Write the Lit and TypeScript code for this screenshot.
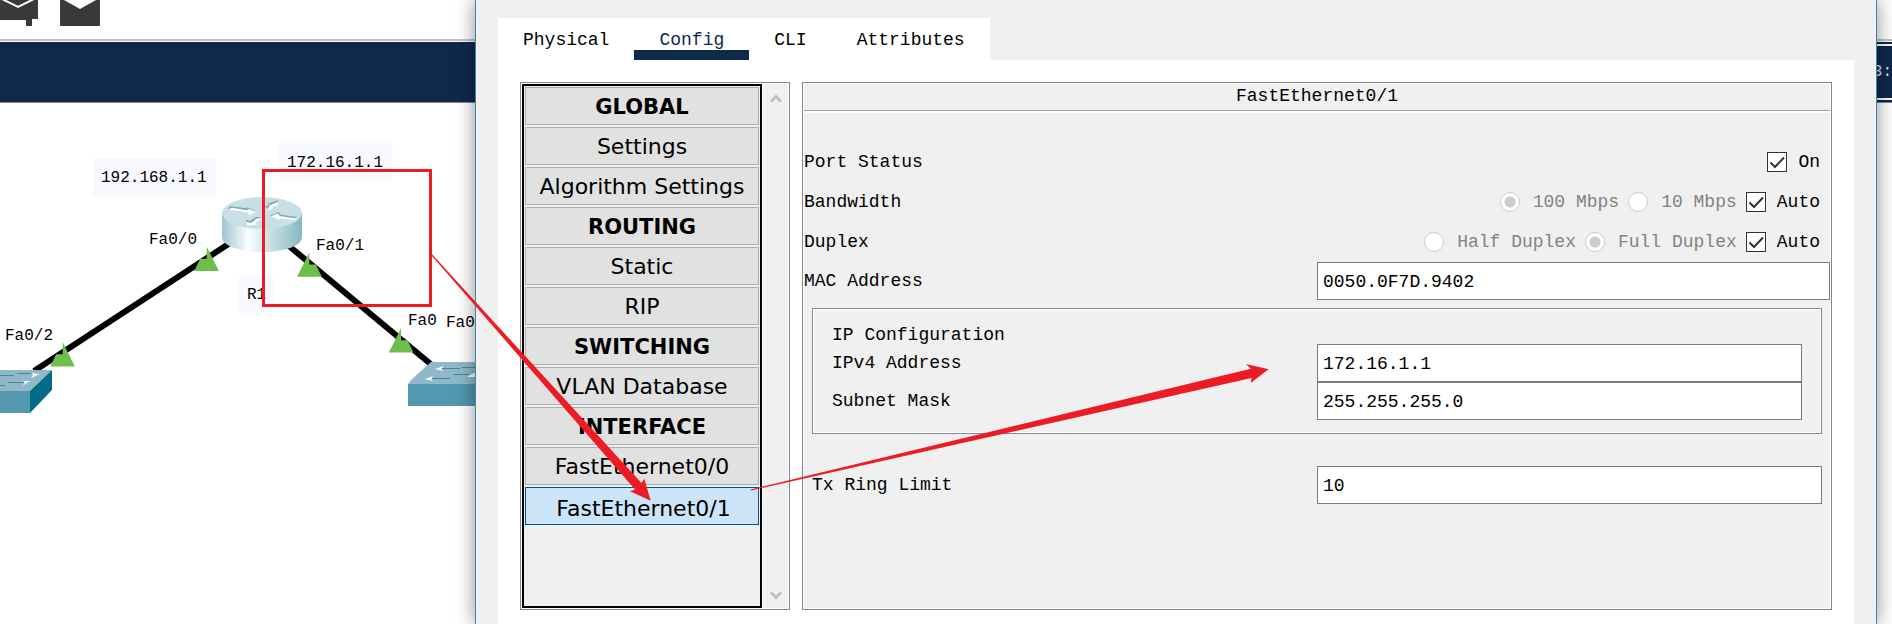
import { LitElement, html, css, svg } from "lit";
import { customElement, state } from "lit/decorators.js";
import { classMap } from "lit/directives/class-map.js";

const note = (x: number, y: number, w: number, text: string) => svg`
  <rect class="note" x=${x} y=${y} width=${w} height="38"></rect>
  <text x=${x + 8} y=${y + 24}>${text}</text>`;

const link = (x: number, y: number, flip: boolean) => svg`
  <path class="up" transform="translate(${x} ${y}) scale(${flip ? -1 : 1} 1)"
    d="M0 0V12H6.500L12.500 24.300H-12.200Z"></path>`;

@customElement("topology-view")
export class TopologyView extends LitElement {
  static styles = css`
    :host {
      display: flex;
      flex-direction: column;
      overflow: hidden;
      background: #fff;
    }
    .tools {
      display: flex;
      gap: 22px;
      height: 39px;
      border-bottom: 2px solid #c3c3c3;
    }
    .tool {
      padding: 0;
      border: 0;
      background: none;
      height: 26px;
    }
    .tool svg {
      display: block;
    }
    .bar {
      height: 60px;
      margin-top: 1px;
      background: #0f294d;
      border-bottom: 1px solid #85888e;
    }
    .canvas {
      display: block;
      flex: 1;
      width: 100%;
      min-height: 320px;
      font: 16px "Liberation Mono", monospace;
    }
    .note {
      fill: #f8f8ff;
    }
    .up {
      fill: #6cbf4a;
    }
    .cable {
      stroke: #000;
      stroke-width: 6;
    }
    .shade {
      fill: #7ba9b6;
    }
    .light {
      fill: #fff;
    }
    .trace {
      stroke: #4a8599;
      stroke-width: 1;
      fill: none;
    }
  `;

  render() {
    return html`
      <div class="tools">
        <button class="tool" aria-label="Add simple PDU">
          <svg width="38" height="26">
            <path d="M0 0H38V19H32V26H26V20H0Z" fill="#39393b" />
            <path d="M2 -1L18 7L34 -1" fill="none" stroke="#fff" stroke-width="2" />
          </svg>
        </button>
        <button class="tool" aria-label="Add complex PDU">
          <svg width="40" height="26">
            <path d="M0 0H4L20 9L36 0H40V25Q40 26 39 26H1Q0 26 0 25Z" fill="#39393b" />
          </svg>
        </button>
      </div>
      <div class="bar"></div>
      <svg class="canvas">
        <defs>
          <linearGradient id="drum">
            <stop offset="0" stop-color="#9cc5ce" />
            <stop offset=".32" stop-color="#fafdfd" />
            <stop offset=".5" stop-color="#dcebee" />
            <stop offset="1" stop-color="#86b8c2" />
          </linearGradient>
        </defs>
        <g transform="translate(0 -103)">
          <path class="cable" d="M34 371L230 243" />
          <path class="cable" d="M289 246L433 366" />
          ${note(93, 158, 123, "192.168.1.1")} ${note(279, 143, 113, "172.16.1.1")}
          ${note(239, 275, 34, "R1")}
          <text x="149" y="244">Fa0/0</text>
          <text x="316" y="250">Fa0/1</text>
          <text x="5" y="340">Fa0/2</text>
          <text x="408" y="325">Fa0</text>
          <text x="446" y="327">Fa0</text>
          ${link(206.7, 246.7, true)} ${link(309.3, 252.5, false)}
          ${link(401, 328.3, false)} ${link(62.7, 342.3, true)}

          <path d="M222 213V237C222 246 240 252 262 252S302 246 302 237V213Z" fill="url(#drum)" />
          <ellipse cx="262" cy="213" rx="40" ry="16" fill="#c9dfe6" />
          <path class="shade" d="M227.500 208.500L230 206.300L247.500 208.300L247 207L256 211L249 213L230 208.500Z" />
          <path class="light" d="M229 209.500L232 207.700L247 210.300L249 208.700L256 212L249 215.300L248 212.700Z" />
          <path class="shade" d="M269.500 216L279 212L280 214.500L297 217L296 218.500L279 216Z" />
          <path class="light" d="M296 220.500L297 218.500L280 216.300L278 213.500L271 216.300L279 219.800L280.500 218.300Z" />
          <path class="shade" d="M265 207L270 204L266 204L278 200.500V202L272 205L267 208Z" />
          <path class="light" d="M267 211L270 207.500L269 205.500L278 202V206L276 205.300L270 209.700Z" />
          <path class="shade" d="M262 217H256L250 221L246 220V222L252 223L257 219Z" />
          <path class="light" d="M262 218.500H257L251 223L247 222V225.500L258 224.500L255 223Z" />

          <path d="M0 370H52L30 391H0Z" fill="#8fb9c9" />
          <path d="M0 391H30V413H0Z" fill="#5398ae" />
          <path d="M52 370V390L30 413V391Z" fill="#006c88" />
          <path class="trace" d="M17 373.500H33M0 375.500H14M8 382.500H24M0 385.500H5" />
          <path class="light" d="M31 373L40 374L31 378L33 375ZM23 381L30 381L22 386L25 383Z" />

          <path d="M431 362H476V384H408L412 379Z" fill="#8fb9c9" />
          <path d="M408 384H476V406H408Z" fill="#5398ae" />
          <path class="trace" d="M442 368.500H460M462 367.500H476M432 378.500H450M453 374.500H469" />
          <path class="light" d="M435 369L444 366L441 369L443 371ZM425 379L433 376L431 379L433 381ZM467 377L474 373H476V377Z" />
        </g>
      </svg>
    `;
  }
}

@customElement("app-root")
export class AppRoot extends LitElement {
  @state() private tab = "Config";
  @state() private item = "FastEthernet0/1";

  private tabs = ["Physical", "Config", "CLI", "Attributes"];
  private items = [
    "GLOBAL", "Settings", "Algorithm Settings", "ROUTING", "Static", "RIP",
    "SWITCHING", "VLAN Database", "INTERFACE", "FastEthernet0/0", "FastEthernet0/1",
  ];

  static styles = css`
    :host {
      display: grid;
      grid-template-columns: 475px minmax(0, 1fr) 15px;
      position: relative;
      min-height: 100vh;
      overflow: hidden;
      background: #fff;
      color: #000;
      font: 18px/24px "Liberation Mono", monospace;
    }
    * {
      box-sizing: border-box;
    }
    .dialog {
      display: flex;
      flex-direction: column;
      z-index: 1;
      padding: 18px 22px 0;
      background: #f0f0f0;
      border: solid #3d87a8;
      border-width: 0 1px;
      box-shadow: 0 0 18px rgba(0, 0, 0, 0.45);
    }
    .tabs {
      display: flex;
      align-self: flex-start;
      background: #fff;
    }
    .tab {
      height: 42px;
      padding: 12px 25px 0;
      border: 0;
      border-bottom: 10px solid #fff;
      background: none;
      color: #000;
      font: inherit;
      line-height: 20px;
    }
    .tab.active {
      border-color: #0f294d;
      color: #0f294d;
    }
    .page {
      display: flex;
      flex: 1;
      gap: 12px;
      padding: 22px 22px 14px;
      background: #fff;
    }
    .side {
      display: flex;
      width: 270px;
      padding: 1px;
      border: 1px solid #828790;
    }
    .list {
      display: flex;
      flex-direction: column;
      gap: 2px;
      width: 240px;
      padding: 1px;
      border: 2px solid #000;
      background: #f0f0f0;
    }
    .item {
      height: 38px;
      padding: 1px 0 0;
      border: 1px solid #adadad;
      background: #e1e1e1;
      color: #000;
      font: 22px "DejaVu Sans", sans-serif;
      white-space: nowrap;
    }
    .item.head {
      font-weight: bold;
      font-size: 21px;
    }
    .item.active {
      padding: 4px 0 0 3px;
      border-color: #005499;
      background: #cce4f7;
    }
    .scroll {
      display: flex;
      flex: 1;
      flex-direction: column;
      align-items: center;
      justify-content: space-between;
      margin-left: 1px;
      padding: 10px 0 8px;
      background: #f0f0f0;
    }
    .chev {
      fill: none;
      stroke: #bfbfbf;
      stroke-width: 3;
    }
    .form {
      flex: 1;
      min-width: 0;
      padding: 1px;
      border: 1px solid #828790;
      background: #f0f0f0;
      box-shadow: inset 0 0 0 1px #fff;
    }
    .title {
      margin: 0;
      height: 29px;
      border-bottom: 2px solid #fff;
      box-shadow: inset 0 -1px #a0a0a0;
      font: inherit;
      text-align: center;
    }
    .rows {
      padding-top: 29px;
    }
    .row {
      display: grid;
      grid-template-columns: 1fr 1fr;
      align-items: center;
      line-height: 28px;
    }
    .row.options {
      grid-template-columns: auto 1fr;
      height: 40px;
    }
    .choices {
      display: flex;
      justify-content: flex-end;
      gap: 9px;
      padding-right: 10px;
    }
    .choice {
      display: flex;
      align-items: center;
      gap: 11px;
    }
    .choice.off {
      gap: 13px;
      color: #838383;
    }
    .check,
    .radio {
      appearance: none;
      width: 20px;
      height: 20px;
      margin: 0;
      border: 1px solid #333;
      background: #fff;
    }
    .check:checked {
      background: #fff
        url("data:image/svg+xml,%3Csvg xmlns='http://www.w3.org/2000/svg' width='18' height='18'%3E%3Cpath d='M2.500 9.500L7 14L16 4.500' fill='none' stroke='%23333' stroke-width='2'/%3E%3C/svg%3E");
    }
    .radio {
      border-color: #ccc;
      border-radius: 50%;
    }
    .radio:checked {
      background: radial-gradient(circle, #ccc 5px, #fff 6px);
    }
    .field {
      width: 100%;
      height: 38px;
      padding: 2px 5px 0;
      border: 1px solid #7a7a7a;
      border-radius: 0;
      background: #fff;
      color: #000;
      font: inherit;
    }
    .group {
      margin: 8px 8px 32px;
      padding: 17px 19px 13px;
      border: 1px solid #828790;
      box-shadow: inset 0 0 0 1px #fff;
    }
    .legend {
      line-height: 18px;
    }
    .row.inset {
      margin: 0 8px;
    }
    .rest {
      overflow: hidden;
      padding-top: 39px;
    }
    .clock {
      display: flex;
      align-items: center;
      justify-content: flex-end;
      height: 64px;
      border-top: 2px solid #c3c3c3;
      border-bottom: 1px solid #85888e;
      background: linear-gradient(#fff 1px, #0f294d 1px 3px, #fff 3px 5px, #0f294d 5px 57px, #fff 57px 59px, #0f294d 59px);
      color: #dfe3e8;
      font-size: 16px;
    }
    .marks {
      position: absolute;
      inset: 0;
      z-index: 2;
      width: 100%;
      height: 100%;
      pointer-events: none;
      fill: #ed1c24;
    }
    .frame {
      fill: none;
      stroke: #ed1c24;
      stroke-width: 3;
    }
  `;

  private toggle(type: "radio" | "checkbox", label: string, checked: boolean, name = "") {
    const off = type === "radio";
    return html`<label class=${classMap({ choice: true, off })}>
      <input class=${off ? "radio" : "check"} type=${type} name=${name} ?checked=${checked} ?disabled=${off} />${label}
    </label>`;
  }

  private text(id: string, label: string, value: string, extra = "") {
    return html`<div class="row ${extra}">
      <label for=${id}>${label}</label>
      <input class="field" id=${id} type="text" value=${value} />
    </div>`;
  }

  render() {
    return html`
      <topology-view></topology-view>
      <main class="dialog">
        <div class="tabs" role="tablist">
          ${this.tabs.map((t) => html`<button role="tab"
            class=${classMap({ tab: true, active: t === this.tab })}
            @click=${() => (this.tab = t)}>${t}</button>`)}
        </div>
        <div class="page">
          <div class="side">
            <nav class="list">
              ${this.items.map((t) => html`<button
                class=${classMap({ item: true, head: t.length > 3 && t === t.toUpperCase(), active: t === this.item })}
                @click=${() => (this.item = t)}>${t}</button>`)}
            </nav>
            <div class="scroll">
              <svg width="12" height="9"><path class="chev" d="M1 7.500L6 2.500L11 7.500" /></svg>
              <svg width="12" height="9"><path class="chev" d="M1 1.500L6 6.500L11 1.500" /></svg>
            </div>
          </div>
          <section class="form">
            <h2 class="title">FastEthernet0/1</h2>
            <div class="rows">
              <div class="row options">
                <span>Port Status</span>
                <div class="choices">${this.toggle("checkbox", "On", true)}</div>
              </div>
              <div class="row options">
                <span>Bandwidth</span>
                <div class="choices">
                  ${this.toggle("radio", "100 Mbps", true, "bandwidth")}
                  ${this.toggle("radio", "10 Mbps", false, "bandwidth")}
                  ${this.toggle("checkbox", "Auto", true)}
                </div>
              </div>
              <div class="row options">
                <span>Duplex</span>
                <div class="choices">
                  ${this.toggle("radio", "Half Duplex", false, "duplex")}
                  ${this.toggle("radio", "Full Duplex", true, "duplex")}
                  ${this.toggle("checkbox", "Auto", true)}
                </div>
              </div>
              ${this.text("mac", "MAC Address", "0050.0F7D.9402")}
              <div class="group" role="group" aria-labelledby="ip">
                <div class="legend" id="ip">IP Configuration</div>
                ${this.text("ipv4", "IPv4 Address", "172.16.1.1")}
                ${this.text("mask", "Subnet Mask", "255.255.255.0")}
              </div>
              ${this.text("ring", "Tx Ring Limit", "10", "inset")}
            </div>
          </section>
        </div>
      </main>
      <div class="rest"><div class="clock">3:</div></div>
      <svg class="marks" aria-hidden="true">
        <rect class="frame" x="263.500" y="170.500" width="167" height="135" />
        <path d="M428.500 252L430 252L641.500 483L644.300 478.700L650.700 500.700L630 491.300L635 489.500Z" />
        <path d="M750.500 489.500L1250.800 368.700L1246 364L1268.600 369.300L1250.800 383L1251.500 378L751 490.500Z" />
      </svg>
    `;
  }
}
